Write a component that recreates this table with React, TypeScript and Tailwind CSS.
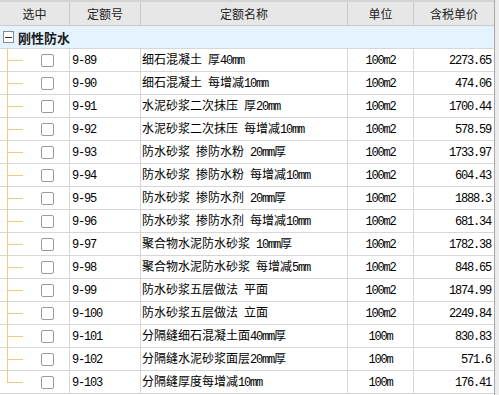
const rows = [
  { code: "9-89", name: "细石混凝土 厚40mm", unit: "100m2", price: "2273.65" },
  { code: "9-90", name: "细石混凝土 每增减10mm", unit: "100m2", price: "474.06" },
  { code: "9-91", name: "水泥砂浆二次抹压 厚20mm", unit: "100m2", price: "1700.44" },
  { code: "9-92", name: "水泥砂浆二次抹压 每增减10mm", unit: "100m2", price: "578.59" },
  { code: "9-93", name: "防水砂浆 掺防水粉 20mm厚", unit: "100m2", price: "1733.97" },
  { code: "9-94", name: "防水砂浆 掺防水粉 每增减10mm", unit: "100m2", price: "604.43" },
  { code: "9-95", name: "防水砂浆 掺防水剂 20mm厚", unit: "100m2", price: "1888.3" },
  { code: "9-96", name: "防水砂浆 掺防水剂 每增减10mm", unit: "100m2", price: "681.34" },
  { code: "9-97", name: "聚合物水泥防水砂浆 10mm厚", unit: "100m2", price: "1782.38" },
  { code: "9-98", name: "聚合物水泥防水砂浆 每增减5mm", unit: "100m2", price: "848.65" },
  { code: "9-99", name: "防水砂浆五层做法 平面", unit: "100m2", price: "1874.99" },
  { code: "9-100", name: "防水砂浆五层做法 立面", unit: "100m2", price: "2249.84" },
  { code: "9-101", name: "分隔缝细石混凝土面40mm厚", unit: "100m", price: "830.83" },
  { code: "9-102", name: "分隔缝水泥砂浆面层20mm厚", unit: "100m", price: "571.6" },
  { code: "9-103", name: "分隔缝厚度每增减10mm", unit: "100m", price: "176.41" },
];

// ascii runs get the narrow mono face, like the old SimSun half-width glyphs
function Mixed({ text }: { text: string }) {
  const parts = text.split(/([\x20-\x7e]+)/).filter(Boolean);
  return (
    <span className="whitespace-pre">
      {parts.map((p, i) =>
        /^[\x20-\x7e]+$/.test(p) ? (
          <span
            key={i}
            className="font-['Liberation_Mono',monospace] text-[12px] tracking-[-1.2px]"
          >
            {p}
          </span>
        ) : (
          <span key={i}>{p}</span>
        )
      )}
    </span>
  );
}

function HeaderCell({ label, last }: { label: string; last?: boolean }) {
  return (
    <div
      className={`flex items-center justify-center ${
        last ? "" : "border-r border-[#c9c9c9]"
      }`}
    >
      {label}
    </div>
  );
}

export default function App() {
  return (
    <div className="flex w-[499px] h-[395px] bg-white font-['Noto_Sans_CJK_SC',sans-serif] text-[12px] leading-none text-black overflow-hidden">
      <div className="w-[495px] border-r border-[#a9a9a9]">
        <div className="h-[2px] bg-[#d4d4d4]" />

        {/* header */}
        <div className="grid grid-cols-[70px_71px_207px_66px_80px] h-[24px] bg-[#e7e7e7] border-b border-[#c9c9c9] text-[#222]">
          <HeaderCell label="选中" />
          <HeaderCell label="定额号" />
          <HeaderCell label="定额名称" />
          <HeaderCell label="单位" />
          <HeaderCell label="含税单价" last />
        </div>

        {/* group row */}
        <div className="flex items-center h-[23px] bg-[#e5f3ff] border-b border-[#d6d6d6]">
          <div className="ml-[3px] w-[11px] h-[12px] border border-[#8a8a8a] bg-white flex items-center justify-center">
            <div className="w-[7px] h-px bg-[#333]" />
          </div>
          <span className="ml-[4px] text-[13px] font-bold text-[#1a1a1a]">刚性防水</span>
        </div>

        {rows.map((r, i) => {
          const last = i === rows.length - 1;
          return (
            <div
              key={r.code}
              className="grid grid-cols-[70px_71px_207px_66px_80px] h-[23px] border-b border-[#d6d6d6]"
            >
              <div className="relative flex items-center pl-[41px] border-r border-[#d6d6d6]">
                <span
                  className={`absolute left-[7px] top-0 w-px bg-[#f7c884] ${
                    last ? "h-[12px]" : "-bottom-px"
                  }`}
                />
                <span className="absolute left-[7px] top-[11px] w-[16px] h-px bg-[#f7c884]" />
                <div className="w-[13px] h-[13px] rounded-[2px] border border-[#9a9a9a] bg-white" />
              </div>
              <div className="flex items-center pl-[2px] border-r border-[#d6d6d6]">
                <Mixed text={r.code} />
              </div>
              <div className="flex items-center pl-[1px] border-r border-[#d6d6d6] overflow-hidden">
                <Mixed text={r.name} />
              </div>
              <div className="flex items-center justify-center border-r border-[#d6d6d6]">
                <Mixed text={r.unit} />
              </div>
              <div className="flex items-center justify-end pr-[3px]">
                <Mixed text={r.price} />
              </div>
            </div>
          );
        })}
      </div>
      <div className="flex-1 bg-[#ebebeb]" />
    </div>
  );
}
